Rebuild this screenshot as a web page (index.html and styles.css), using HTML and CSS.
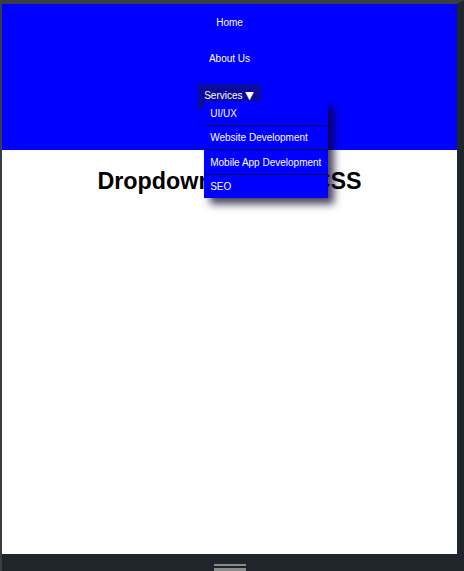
FILE: index.html
```html
<!DOCTYPE html>
<html lang="en">
<head>
<meta charset="utf-8">
<title>Dropdown Menu in CSS</title>
<link rel="stylesheet" href="styles.css">
</head>
<body>
<div class="device">
  <div class="screen">
    <header class="header">
      <ul class="nav">
        <li class="nav-item"><a class="nav-link" href="#">Home</a></li>
        <li class="nav-item"><a class="nav-link" href="#">About Us</a></li>
        <li class="nav-item has-dropdown">
          <a class="nav-link active" href="#">Services <span class="caret">▼</span></a>
          <ul class="dropdown">
            <li class="dropdown-item"><a href="#">UI/UX</a></li>
            <li class="dropdown-item"><a href="#">Website Development</a></li>
            <li class="dropdown-item"><a href="#">Mobile App Development</a></li>
            <li class="dropdown-item"><a href="#">SEO</a></li>
          </ul>
        </li>
      </ul>
    </header>
    <h1 class="title">Dropdown Menu in CSS</h1>
  </div>
  <div class="bottom-bar">
    <div class="handle"></div>
  </div>
</div>
</body>
</html>
```
FILE: styles.css
```css
* { box-sizing: border-box; }
html, body {
  margin: 0;
  padding: 0;
  background: #20252b;
  font-family: "Liberation Sans", Arial, sans-serif;
}
.device {
  width: 464px;
  height: 571px;
  border-top: 4px solid #393d44;
  border-left: 2px solid #393d44;
  border-right: 7px solid #20252b;
  display: flex;
  flex-direction: column;
  overflow: hidden;
}
.screen {
  width: 455px;
  height: 550px;
  background: #ffffff;
  flex: none;
}
.header {
  background: #0000ff;
  height: 146px;
}
.nav {
  list-style: none;
  margin: 0;
  padding: 1px 0 0;
  display: flex;
  flex-direction: column;
  align-items: center;
}
.nav-item {
  height: 36px;
  display: flex;
  align-items: center;
  justify-content: center;
  position: relative;
}
.nav-link {
  display: block;
  color: #ffffff;
  text-decoration: none;
  font-size: 10px;
  line-height: 12px;
  padding: 6px 6px;
}
.nav-link.active {
  background: #0c0c9c;
  margin-top: 1px;
  padding: 6px 7px 6px 6px;
}
.caret {
  font-family: "DejaVu Sans", sans-serif;
  font-size: 11px;
  line-height: 12px;
}
.dropdown {
  list-style: none;
  margin: 0;
  padding: 0;
  position: absolute;
  left: 6px;
  top: 24px;
  width: 124px;
  background: #0000ff;
  box-shadow: 6px 6px 8px rgba(10, 0, 40, 0.75);
  z-index: 2;
}
.dropdown-item {
  border-bottom: 1px solid #0a0a55;
}
.dropdown-item:last-child { border-bottom: none; }
.dropdown-item a {
  display: block;
  color: #ffffff;
  text-decoration: none;
  font-size: 10px;
  line-height: 12px;
  padding: 6.5px 6px 5px;
  white-space: nowrap;
}
.title {
  margin: 18px 0 0;
  text-align: center;
  font-size: 23.3px;
  font-weight: bold;
  color: #000000;
}
.bottom-bar {
  flex: 1;
  background: #20252b;
  display: flex;
  justify-content: center;
  padding-top: 10px;
}
.handle {
  width: 32px;
  height: 7px;
  border-top: 2px solid #8a8a8a;
  border-bottom: 3px solid #8a8a8a;
}
```
